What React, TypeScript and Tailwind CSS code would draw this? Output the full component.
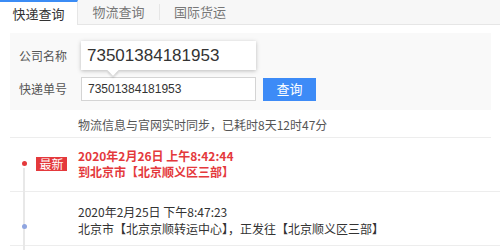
const cjk = "font-['Microsoft_YaHei','Noto_Sans_CJK_SC',sans-serif]";

function Tabs() {
  return (
    <div className="flex h-[25px] bg-[#f7f7f7] border-b border-[#e6e6e6] text-[13px]">
      <div className="w-[78px] h-[25px] bg-white border-t-[2px] border-[#3b8cf5] border-r border-r-[#e6e6e6] flex items-center justify-center text-[#333]">
        快递查询
      </div>
      <div className="w-[82px] flex items-center justify-center text-[#777] border-r border-[#e6e6e6] my-[4px]">
        物流查询
      </div>
      <div className="w-[80px] flex items-center justify-center text-[#777]">国际货运</div>
    </div>
  );
}

function SearchForm() {
  return (
    <div className="mx-[10px] mt-[8px] w-[481px] h-[77px] bg-[#f9f9f9] pl-[9px] pt-[8px] text-[12px] text-[#555]">
      <div className="flex items-center h-[29px]">
        <span className="w-[62px] mt-[1px]">公司名称</span>
        <div className="relative w-[175px] h-[29px] bg-white shadow-[0_1px_4px_rgba(0,0,0,0.25)] flex items-center pl-[6px]">
          <span className="font-['Liberation_Sans',Arial,sans-serif] text-[17px] text-[#333] leading-none">73501384181953</span>
          <div className="absolute left-[28px] -bottom-[4px] w-[8px] h-[8px] bg-white rotate-45 shadow-[2px_2px_2px_rgba(0,0,0,0.12)]" />
        </div>
      </div>
      <div className="flex items-center h-[24px] mt-[7px]">
        <span className="w-[62px]">快递单号</span>
        <div className="w-[175px] h-[24px] bg-white border border-[#d4d4d4] flex items-center pl-[6px]">
          <span className="font-['Liberation_Sans',Arial,sans-serif] text-[12px] text-[#333]">73501384181953</span>
        </div>
        <button type="button" className="ml-[7px] w-[53px] h-[23px] bg-[#3d8bf7] text-white text-[13px] flex items-center justify-center">
          查询
        </button>
      </div>
    </div>
  );
}

function TimelineItem({
  time,
  place,
  latest,
}: {
  time: string;
  place: string;
  latest?: boolean;
}) {
  return (
    <div className="relative flex h-[54px] border-b border-[#ededed] ml-[10px]">
      <div className="relative w-[68px]">
        <div className={`absolute left-[13px] w-[2px] bg-[#e8e8e8] ${latest ? 'top-[30px] bottom-[-1px]' : 'top-0 bottom-[-1px]'}`} />
        {latest ? (
          <>
            <div className="absolute left-[12px] top-[23px] w-[5px] h-[5px] rounded-full bg-[#e4393c]" />
            <div className="absolute left-[26px] top-[19px] w-[31px] h-[14px] bg-[#e4393c] text-white text-[12px] leading-[14px] text-center">
              最新
            </div>
          </>
        ) : (
          <div className="absolute left-[12px] top-[32px] w-[5px] h-[5px] rounded-full bg-[#8fa5e0]" />
        )}
      </div>
      <div className={`text-[12px] ${latest ? 'pt-[10px] leading-[16px] text-[#e4393c] font-bold' : 'pt-[11px] leading-[17px] text-[#333]'}`}>
        <div>{time}</div>
        <div>{place}</div>
      </div>
    </div>
  );
}

export default function App() {
  return (
    <div className={`w-[500px] h-[250px] bg-white overflow-hidden ${cjk}`}>
      <Tabs />
      <SearchForm />
      <div className="ml-[10px] w-[481px] h-[28px] border-b border-[#ededed] pl-[68px] pt-[7px] text-[12px] leading-[16px] text-[#555]">
        物流信息与官网实时同步，已耗时8天12时47分
      </div>
      <TimelineItem time="2020年2月26日 上午8:42:44" place="到北京市【北京顺义区三部】" latest />
      <TimelineItem time="2020年2月25日 下午8:47:23" place="北京市【北京京顺转运中心】，正发往【北京顺义区三部】" />
      <div className="relative h-[40px] ml-[10px]">
        <div className="absolute left-[13px] top-0 bottom-0 w-[2px] bg-[#e8e8e8]" />
      </div>
    </div>
  );
}
